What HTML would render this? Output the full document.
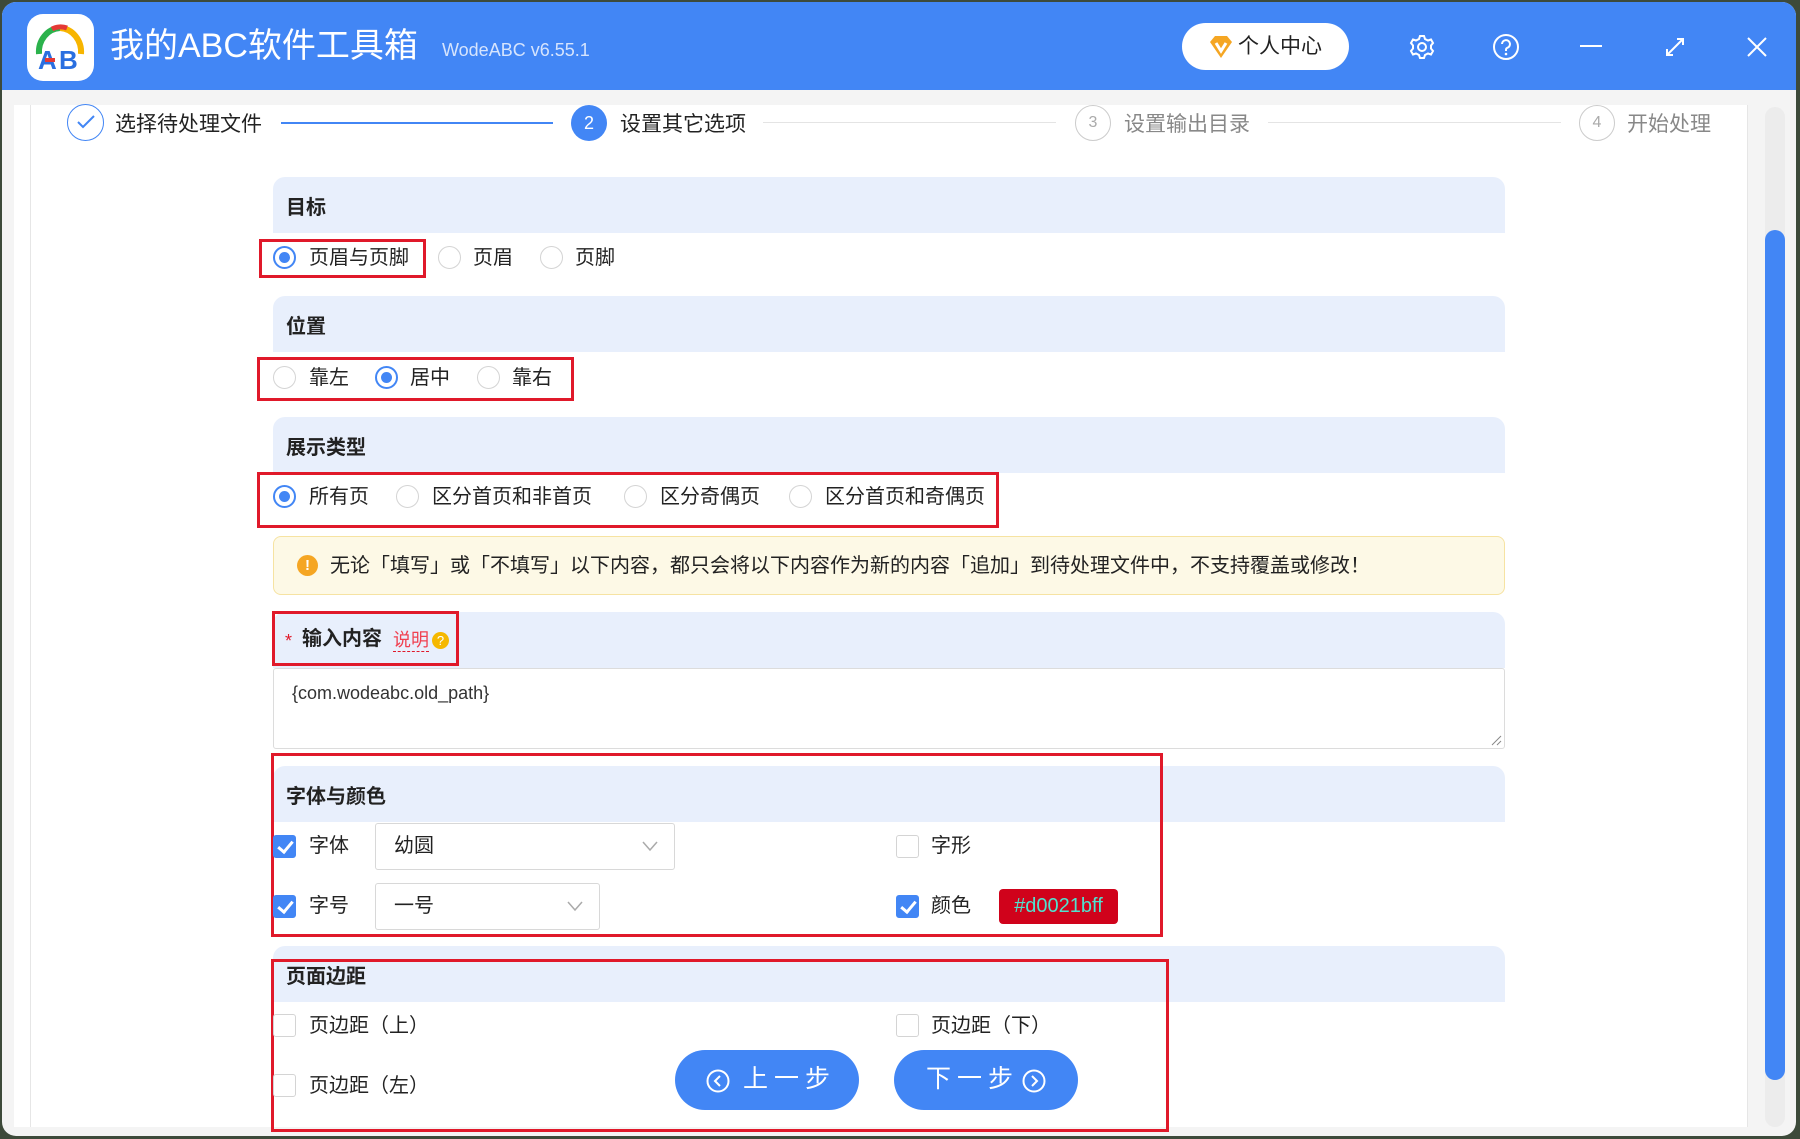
<!DOCTYPE html>
<html><head><meta charset="utf-8"><style>
*{margin:0;padding:0;box-sizing:border-box}
body{width:1800px;height:1139px;overflow:hidden;background:#3d4a3a;font-family:"Liberation Sans","Noto Sans CJK SC",sans-serif;color:#222;position:relative}
.a{position:absolute}
.win{left:2px;top:2px;width:1794px;height:1134px;background:#f4f4f4;border-radius:14px;overflow:hidden}
.hdr{left:0;top:0;width:1794px;height:88px;background:#4286f5}
.t{white-space:nowrap;line-height:1}
.sec{left:273px;width:1232px;height:56px;background:#e8effc;border-radius:12px 12px 0 0}
.sec span{position:absolute;left:13px;top:14px;font-size:20px;font-weight:bold;color:#222}
.rad{width:23px;height:23px;border:1px solid #d4d4d4;border-radius:50%;background:#fff}
.rad.on{border:2px solid #4286f5}
.rad.on:after{content:"";position:absolute;left:4px;top:4px;width:11px;height:11px;border-radius:50%;background:#4286f5}
.lbl{font-size:20px;color:#222}
.red{border:3px solid #e0192a}
.cb{width:23px;height:23px;border:1px solid #d4d4d4;border-radius:3px;background:#fff}
.cb.on{background:#4286f5;border-color:#4286f5}
.cb.on:after{content:"";position:absolute;left:7px;top:2px;width:6px;height:12px;border:solid #fff;border-width:0 3px 3px 0;transform:rotate(40deg)}
.sel{border:1px solid #d8d8d8;border-radius:3px;background:#fff}
.btn{height:60px;width:184px;border-radius:30px;background:#4286f5;color:#fff;font-size:25px;letter-spacing:6px}
</style></head><body>
<div class="a win">
 <div class="a hdr">
  <div class="a" style="left:25px;top:12px;width:67px;height:67px;background:#fff;border-radius:16px">
   <svg width="67" height="67" viewBox="0 0 67 67"><path d="M12 40 A22 24 0 0 1 33 14" stroke="#2bb24c" stroke-width="6" fill="none"/><path d="M33 14 A22 24 0 0 1 54 40" stroke="#f7b500" stroke-width="6" fill="none"/><path d="M25 15 A14 10 0 0 1 40 14" stroke="#e53935" stroke-width="5" fill="none"/><text x="11" y="55" font-size="26" font-weight="bold" fill="#2a6fe0" font-family="Liberation Sans">A</text><text x="32" y="55" font-size="26" font-weight="bold" fill="#2a6fe0" font-family="Liberation Sans">B</text><rect x="18" y="44" width="10" height="4" fill="#e53935"/></svg>
  </div>
  <div class="a t" style="left:108px;top:27px;font-size:34px;color:#fff">我的ABC软件工具箱</div>
  <div class="a t" style="left:440px;top:39px;font-size:18px;color:#d6e4fd">WodeABC v6.55.1</div>
  <div class="a" style="left:1180px;top:21px;width:167px;height:47px;background:#fff;border-radius:24px">
   <svg class="a" style="left:26px;top:12px" width="26" height="24" viewBox="0 0 26 24"><path d="M2 7 L7 1 H19 L24 7 L13 23 Z" fill="#f5a623"/><path d="M8 8 L13 16 L18 8" stroke="#fff" stroke-width="3" fill="none"/></svg>
   <div class="a t" style="left:56px;top:13px;font-size:21px;color:#222">个人中心</div>
  </div>
  <svg class="a" style="left:1407px;top:32px" width="26" height="26" viewBox="0 0 26 26"><circle cx="13" cy="13" r="4" stroke="#fff" stroke-width="2" fill="none"/><path d="M11 2h4l1 3 3 1.5 3-1 2 3.5-2 2.5v3l2 2.5-2 3.5-3-1-3 1.5-1 3h-4l-1-3-3-1.5-3 1-2-3.5 2-2.5v-3l-2-2.5 2-3.5 3 1 3-1.5z" stroke="#fff" stroke-width="2" fill="none"/></svg>
  <svg class="a" style="left:1490px;top:31px" width="28" height="28" viewBox="0 0 28 28"><circle cx="14" cy="14" r="12" stroke="#fff" stroke-width="2" fill="none"/><path d="M10 11a4 4 0 1 1 5 4c-1 .5-1 1-1 3" stroke="#fff" stroke-width="2" fill="none"/><circle cx="14" cy="21" r="1.3" fill="#fff"/></svg>
  <div class="a" style="left:1578px;top:43px;width:22px;height:2px;background:#fff"></div>
  <svg class="a" style="left:1662px;top:34px" width="22" height="22" viewBox="0 0 22 22"><path d="M3 19 L19 3 M13 3h6v6 M3 13v6h6" stroke="#fff" stroke-width="2" fill="none"/></svg>
  <svg class="a" style="left:1744px;top:34px" width="22" height="22" viewBox="0 0 22 22"><path d="M2 2 L20 20 M20 2 L2 20" stroke="#fff" stroke-width="2"/></svg>
 </div>
 <div class="a" style="left:12px;top:103px;width:1734px;height:1022px;background:#fff"></div>
 <div class="a" style="left:28px;top:103px;width:1px;height:1022px;background:#e6e6e6"></div>
 <div class="a" style="left:1745px;top:103px;width:1px;height:1022px;background:#e6e6e6"></div>
 <div class="a" style="left:1763px;top:105px;width:20px;height:1020px;background:#ececec;border-radius:10px"></div>
 <div class="a" style="left:1763px;top:228px;width:20px;height:850px;background:#4286f5;border-radius:10px"></div>
</div>
<!-- steps -->
<div class="a" style="left:67px;top:104px;width:37px;height:37px;border:1.5px solid #4286f5;border-radius:50%"><svg class="a" style="left:9px;top:10px" width="18" height="14"><path d="M1 7 L6 12 L17 1" stroke="#4286f5" stroke-width="2" fill="none"/></svg></div>
<div class="a t lbl" style="left:115px;top:114px;font-size:21px">选择待处理文件</div>
<div class="a" style="left:281px;top:122px;width:272px;height:2px;background:#4286f5"></div>
<div class="a" style="left:571px;top:105px;width:36px;height:36px;background:#4286f5;border-radius:50%;color:#fff;font-size:18px;text-align:center;line-height:36px">2</div>
<div class="a t lbl" style="left:620px;top:114px;font-size:21px">设置其它选项</div>
<div class="a" style="left:763px;top:122px;width:293px;height:1px;background:#e4e4e4"></div>
<div class="a" style="left:1075px;top:105px;width:36px;height:36px;border:1px solid #ccc;border-radius:50%;color:#aaa;font-size:16px;text-align:center;line-height:34px">3</div>
<div class="a t" style="left:1124px;top:114px;font-size:21px;color:#888">设置输出目录</div>
<div class="a" style="left:1268px;top:122px;width:293px;height:1px;background:#e4e4e4"></div>
<div class="a" style="left:1579px;top:105px;width:36px;height:36px;border:1px solid #ccc;border-radius:50%;color:#aaa;font-size:16px;text-align:center;line-height:34px">4</div>
<div class="a t" style="left:1627px;top:114px;font-size:21px;color:#888">开始处理</div>

<!-- 目标 -->
<div class="a sec" style="top:177px"><span>目标</span></div>
<div class="a red" style="left:259px;top:239px;width:167px;height:39px"></div>
<div class="a rad on" style="left:273px;top:246px"></div><div class="a t lbl" style="left:309px;top:248px">页眉与页脚</div>
<div class="a rad" style="left:438px;top:246px"></div><div class="a t lbl" style="left:473px;top:248px">页眉</div>
<div class="a rad" style="left:540px;top:246px"></div><div class="a t lbl" style="left:575px;top:248px">页脚</div>
<!-- 位置 -->
<div class="a sec" style="top:296px"><span>位置</span></div>
<div class="a red" style="left:257px;top:357px;width:317px;height:44px"></div>
<div class="a rad" style="left:273px;top:366px"></div><div class="a t lbl" style="left:309px;top:368px">靠左</div>
<div class="a rad on" style="left:375px;top:366px"></div><div class="a t lbl" style="left:410px;top:368px">居中</div>
<div class="a rad" style="left:477px;top:366px"></div><div class="a t lbl" style="left:512px;top:368px">靠右</div>
<!-- 展示类型 -->
<div class="a sec" style="top:417px"><span>展示类型</span></div>
<div class="a red" style="left:257px;top:472px;width:742px;height:56px"></div>
<div class="a rad on" style="left:273px;top:485px"></div><div class="a t lbl" style="left:309px;top:487px">所有页</div>
<div class="a rad" style="left:396px;top:485px"></div><div class="a t lbl" style="left:432px;top:487px">区分首页和非首页</div>
<div class="a rad" style="left:624px;top:485px"></div><div class="a t lbl" style="left:660px;top:487px">区分奇偶页</div>
<div class="a rad" style="left:789px;top:485px"></div><div class="a t lbl" style="left:825px;top:487px">区分首页和奇偶页</div>
<!-- warning -->
<div class="a" style="left:273px;top:536px;width:1232px;height:59px;background:#fdf9e6;border:1px solid #f6e3a2;border-radius:8px"></div>
<div class="a" style="left:297px;top:555px;width:21px;height:21px;background:#f5a623;border-radius:50%;color:#fff;font-size:15px;font-weight:bold;text-align:center;line-height:21px">!</div>
<div class="a t lbl" style="left:330px;top:556px">无论「填写」或「不填写」以下内容，都只会将以下内容作为新的内容「追加」到待处理文件中，不支持覆盖或修改！</div>
<!-- 输入内容 -->
<div class="a sec" style="top:612px"></div>
<div class="a red" style="left:272px;top:611px;width:187px;height:55px"></div>
<div class="a t" style="left:285px;top:632px;font-size:18px;color:#e0192a">*</div>
<div class="a t" style="left:302px;top:629px;font-size:20px;font-weight:bold">输入内容</div>
<div class="a t" style="left:393px;top:631px;font-size:18px;color:#f04050;border-bottom:1.5px dashed #e0192a;padding-bottom:2px">说明</div>
<div class="a" style="left:432px;top:632px;width:17px;height:17px;background:#f5b800;border-radius:50%;color:#fff;font-size:13px;text-align:center;line-height:17px">?</div>
<div class="a" style="left:273px;top:668px;width:1232px;height:81px;border:1px solid #dcdcdc;border-radius:3px;background:#fff"></div>
<div class="a t" style="left:292px;top:684px;font-size:18px;color:#333">{com.wodeabc.old_path}</div>
<svg class="a" style="left:1490px;top:734px" width="12" height="12"><path d="M2 11 L11 2 M7 11 L11 7" stroke="#888" stroke-width="1"/></svg>
<!-- 字体与颜色 -->
<div class="a sec" style="top:766px"><span>字体与颜色</span></div>
<div class="a red" style="left:271px;top:753px;width:892px;height:184px"></div>
<div class="a cb on" style="left:273px;top:835px"></div><div class="a t lbl" style="left:309px;top:836px">字体</div>
<div class="a sel" style="left:375px;top:823px;width:300px;height:47px"></div>
<div class="a t lbl" style="left:394px;top:836px">幼圆</div>
<svg class="a" style="left:642px;top:840px" width="16" height="12"><path d="M1 2 L8 10 L15 2" stroke="#aaa" stroke-width="1.5" fill="none"/></svg>
<div class="a cb" style="left:896px;top:835px"></div><div class="a t lbl" style="left:931px;top:836px">字形</div>
<div class="a cb on" style="left:273px;top:895px"></div><div class="a t lbl" style="left:309px;top:896px">字号</div>
<div class="a sel" style="left:375px;top:883px;width:225px;height:47px"></div>
<div class="a t lbl" style="left:394px;top:896px">一号</div>
<svg class="a" style="left:567px;top:900px" width="16" height="12"><path d="M1 2 L8 10 L15 2" stroke="#aaa" stroke-width="1.5" fill="none"/></svg>
<div class="a cb on" style="left:896px;top:895px"></div><div class="a t lbl" style="left:931px;top:896px">颜色</div>
<div class="a t" style="left:999px;top:889px;width:119px;height:35px;background:#d0021b;border-radius:4px;color:#4fe3cf;font-size:20px;text-align:center;line-height:35px">#d0021bff</div>
<!-- 页面边距 -->
<div class="a sec" style="top:946px"><span>页面边距</span></div>
<div class="a red" style="left:271px;top:959px;width:898px;height:173px"></div>
<div class="a cb" style="left:273px;top:1014px"></div><div class="a t lbl" style="left:309px;top:1016px">页边距（上）</div>
<div class="a cb" style="left:896px;top:1014px"></div><div class="a t lbl" style="left:931px;top:1016px">页边距（下）</div>
<div class="a cb" style="left:273px;top:1074px"></div><div class="a t lbl" style="left:309px;top:1076px">页边距（左）</div>
<div class="a btn" style="left:675px;top:1050px"><svg class="a" style="left:31px;top:19px" width="24" height="24"><circle cx="12" cy="12" r="10.5" stroke="#fff" stroke-width="2" fill="none"/><path d="M14 7 L9 12 L14 17" stroke="#fff" stroke-width="2" fill="none"/></svg><div class="a t" style="left:68px;top:17px">上一步</div></div>
<div class="a btn" style="left:894px;top:1050px"><div class="a t" style="left:32px;top:17px">下一步</div><svg class="a" style="left:128px;top:19px" width="24" height="24"><circle cx="12" cy="12" r="10.5" stroke="#fff" stroke-width="2" fill="none"/><path d="M10 7 L15 12 L10 17" stroke="#fff" stroke-width="2" fill="none"/></svg></div>
</body></html>
